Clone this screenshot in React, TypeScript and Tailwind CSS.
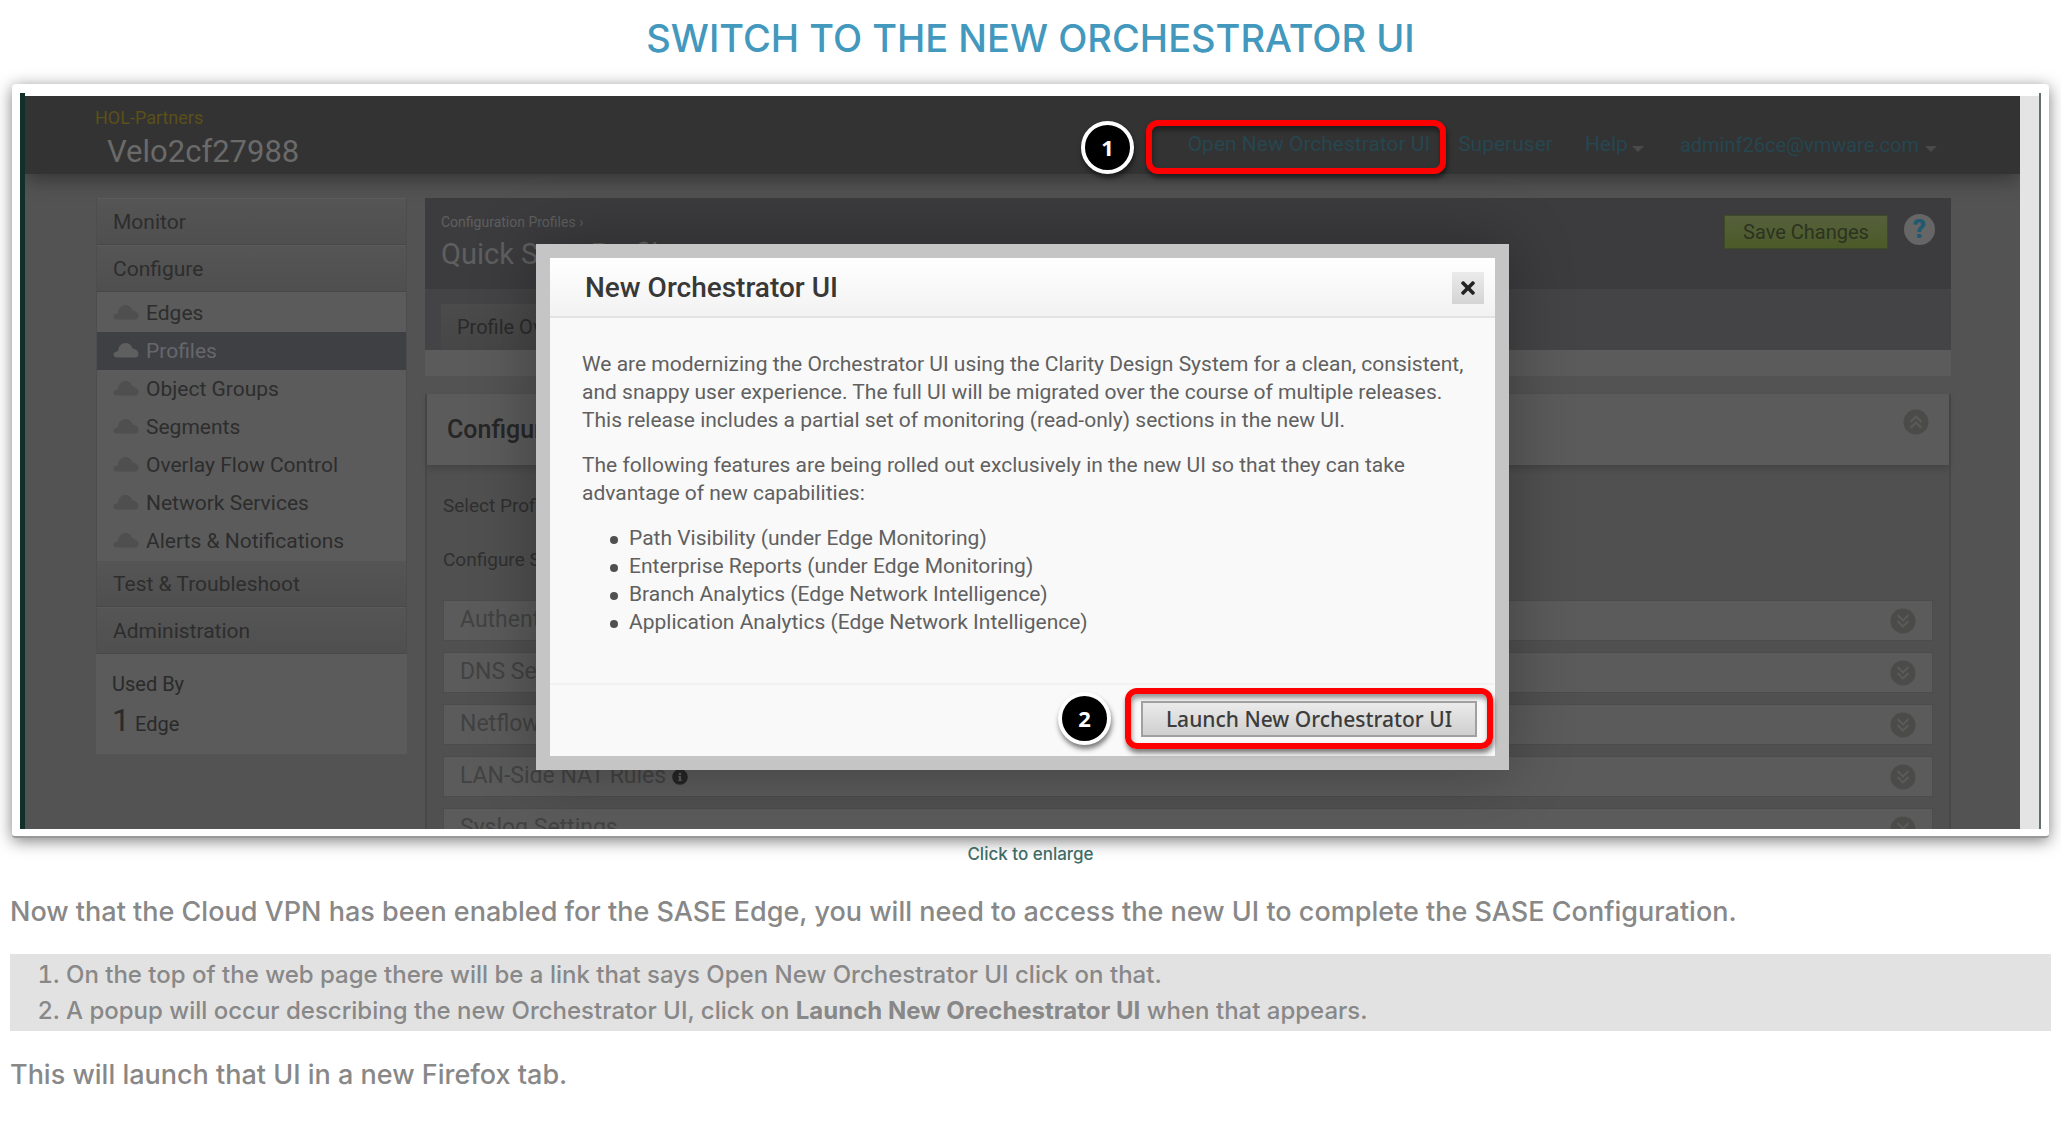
import type { ReactNode } from "react";
import { FaTimes, FaInfoCircle } from "react-icons/fa";

const CONFIGURE_ITEMS = [
  "Edges",
  "Profiles",
  "Object Groups",
  "Segments",
  "Overlay Flow Control",
  "Network Services",
  "Alerts & Notifications",
];

const SECTIONS = ["Authentication", "DNS Settings", "Netflow Settings", "LAN-Side NAT Rules", "Syslog Settings"];

const FEATURES = [
  "Path Visibility (under Edge Monitoring)",
  "Enterprise Reports (under Edge Monitoring)",
  "Branch Analytics (Edge Network Intelligence)",
  "Application Analytics (Edge Network Intelligence)",
];

function Chevrons({ up = false }: { up?: boolean }) {
  return (
    <svg viewBox="0 0 26 26" className="size-[26px] shrink-0" aria-hidden="true">
      <circle cx="13" cy="13" r="12.5" fill="#4b4b49" />
      <g fill="none" stroke="#5a5a59" strokeWidth="2.2" transform={up ? undefined : "rotate(180 13 13)"}>
        <path d="M7.5 13 13 7.5 18.5 13" />
        <path d="M7.5 19 13 13.5 18.5 19" />
      </g>
    </svg>
  );
}

function Cloud({ active }: { active: boolean }) {
  return (
    <svg viewBox="0 0 26 16" className="mb-1 h-4 w-[26px] shrink-0" aria-hidden="true">
      <path
        d="M4 15.5C1.500 15.500 .5 14 .5 12.500 .5 10.500 2.500 9.500 5 9.300 5.500 4 8.500 1 12.500 1 16 1 18.500 3 19.500 6.500 23 7 25.500 9 25.500 12 25.500 14.500 24 15.500 22 15.500Z"
        fill={active ? "#5f5f5f" : "#4f4f4f"}
      />
    </svg>
  );
}

function Caret() {
  return <span className="mt-2 border-x-6 border-t-6 border-x-transparent border-t-[#4a4a4a]" />;
}

function Badge({ children }: { children: ReactNode }) {
  return (
    <span className="flex size-[53px] shrink-0 items-center justify-center rounded-full border-4 border-white bg-black font-['Open_Sans',sans-serif] text-[22px] font-bold text-white shadow-[1px_4px_5px_rgba(0,0,0,0.5)]">
      {children}
    </span>
  );
}

function NavHeading({ children }: { children: ReactNode }) {
  return (
    <a
      href="#"
      className="flex h-[47px] items-center border-t border-b border-t-[#5b5b5b] border-b-[#484848] bg-linear-to-b from-[#555555] to-[#4f4f4f] px-4 pt-[2px] text-[#2d2d2d]"
    >
      {children}
    </a>
  );
}

function Sidebar() {
  return (
    <aside className="w-[311px] shrink-0 text-[21px] text-[#2a2a2a]">
      <nav className="border-x border-[#4d4d4d]">
        <NavHeading>Monitor</NavHeading>
        <NavHeading>Configure</NavHeading>
        <ul className="bg-[#5b5b5b] pt-[2px]">
          {CONFIGURE_ITEMS.map((item) => {
            const active = item === "Profiles";
            return (
              <li key={item}>
                <a
                  href="#"
                  className={
                    active
                      ? "flex h-[38px] items-center gap-[7px] bg-[#3f4044] px-4 pt-[2px] text-[#66676c]"
                      : "flex h-[38px] items-center gap-[7px] px-4 pt-[2px] text-[#2d2d2d]"
                  }
                >
                  <Cloud active={active} />
                  {item}
                </a>
              </li>
            );
          })}
        </ul>
        <NavHeading>Test &amp; Troubleshoot</NavHeading>
        <NavHeading>Administration</NavHeading>
      </nav>
      <section className="h-[100px] bg-[#5b5b5b] px-4 pt-3">
        <h2 className="pt-1 text-[20px] leading-7">Used By</h2>
        <p className="text-[20px] leading-[44px]">
          <span className="text-[32px]">1</span> Edge
        </p>
      </section>
    </aside>
  );
}

function Profile() {
  return (
    <main className="flex min-w-0 flex-1 flex-col">
      <header className="flex h-[91px] justify-between bg-[#3c3c3e] px-4 pt-4">
        <div className="text-[#5f5f5f]">
          <p className="text-[14px] leading-4">Configuration Profiles ›</p>
          <h1 className="mt-1 text-[29px] leading-10">Quick Start Profile</h1>
        </div>
        <div className="flex items-start gap-4">
          <button
            type="button"
            className="mt-px h-[34px] w-[164px] border border-[#3c4a26] bg-linear-to-b from-[#56603c] to-[#4b5a28] text-[20px] leading-8 text-[#2c3320]"
          >
            Save Changes
          </button>
          <button
            type="button"
            aria-label="Help"
            className="flex size-[31px] items-center justify-center rounded-full bg-[#666666] text-[26px] font-black text-[#1f5a70]"
          >
            ?
          </button>
        </div>
      </header>
      <div className="flex h-[61px] items-end bg-[#444446] px-4">
        <a
          href="#"
          className="flex h-[46px] w-[180px] items-center bg-linear-to-b from-[#4b4b4b] to-[#464646] px-4 text-[20px] text-[#2a2a2a]"
        >
          Profile Overview
        </a>
      </div>
      <div className="h-[26px] bg-[#5b5b5b]" />
      <section className="mt-[18px] border-x-2 border-[#484848] bg-[#505050]">
        <div className="flex h-[72px] items-center justify-between border-b border-[#464646] bg-[#5b5b5b] pr-5 pl-5 shadow-[0_3px_6px_rgba(0,0,0,0.15)]">
          <h2 className="text-[25px] font-medium text-[#262626]">Configure Segments</h2>
          <div className="mb-4">
            <Chevrons up />
          </div>
        </div>
        <div className="px-4 text-[19px] text-[#2f2f2f]">
          <p className="pt-7 leading-6">Select Profile Segment</p>
          <p className="pt-[30px] leading-6">Configure Segment</p>
          <ul className="mt-7 flex flex-col gap-[11px] text-[23px] text-[#424242]">
            {SECTIONS.map((name) => (
              <li
                key={name}
                className="flex h-[41px] items-center justify-between border border-[#4c4c4c] bg-[#5b5b5b] pr-4 pl-4"
              >
                <span className="flex items-center gap-[6px]">
                  {name}
                  {name === "LAN-Side NAT Rules" && <FaInfoCircle className="size-4 text-[#262626]" />}
                </span>
                <Chevrons />
              </li>
            ))}
          </ul>
        </div>
      </section>
    </main>
  );
}

function Dialog() {
  return (
    <div
      role="dialog"
      aria-label="New Orchestrator UI"
      className="w-[973px] border-14 border-[#c5c5c5] bg-[#f9f9f9] text-[21px] leading-7 text-[#606060] shadow-[0_0_60px_rgba(0,0,0,0.3)]"
    >
      <header className="flex h-[60px] items-center justify-between border-b-2 border-[#e3e3e3] bg-linear-to-b from-white to-[#f2f2f2] pt-[2px] pr-[11px] pl-[35px]">
        <h2 className="text-[28px] font-medium text-[#383838]">New Orchestrator UI</h2>
        <button
          type="button"
          aria-label="Close"
          className="flex size-8 items-center justify-center bg-linear-to-b from-[#ebebeb] to-[#d4d4d4] text-[#222222]"
        >
          <FaTimes className="size-5" />
        </button>
      </header>
      <div className="h-[365px] px-8 pt-8 whitespace-nowrap">
        <p>
          We are modernizing the Orchestrator UI using the Clarity Design System for a clean, consistent,
          <br />
          and snappy user experience. The full UI will be migrated over the course of multiple releases.
          <br />
          This release includes a partial set of monitoring (read-only) sections in the new UI.
        </p>
        <p className="mt-[17px]">
          The following features are being rolled out exclusively in the new UI so that they can take
          <br />
          advantage of new capabilities:
        </p>
        <ul className="mt-[17px]">
          {FEATURES.map((feature) => (
            <li key={feature} className="flex items-center gap-[11px] pl-7">
              <span className="mt-1 size-2 rounded-full bg-[#505050]" />
              {feature}
            </li>
          ))}
        </ul>
      </div>
      <footer className="flex h-[73px] items-center justify-end gap-[14px] border-t-2 border-[#f2f2f2] pr-[2px] pb-[5px]">
        <Badge>2</Badge>
        <span className="flex h-[61px] w-[368px] items-center justify-center rounded-xl border-6 border-[#ff0000] shadow-[1px_4px_5px_rgba(0,0,0,0.5),inset_1px_4px_5px_rgba(0,0,0,0.4)]">
          <button
            type="button"
            className="mt-[2px] h-[36px] w-[336px] border-2 border-[#a0a0a0] bg-linear-to-b from-[#ebebeb] to-[#cfcfcf] font-['Noto_Sans',sans-serif] text-[21px] leading-8 font-medium text-[#3c3c3c]"
          >
            Launch New Orchestrator UI
          </button>
        </span>
      </footer>
    </div>
  );
}

function Console() {
  return (
    <div className="relative flex h-[736px] overflow-hidden border-r-2 border-l-5 border-r-[#5f7069] border-l-[#12302a] pt-[3px] font-['Roboto',sans-serif] font-normal">
      <div className="relative flex min-w-0 flex-1 flex-col overflow-hidden bg-[#535353]">
        <header className="flex h-[78px] shrink-0 justify-between bg-[#333333] pr-[83px] pl-[70px] shadow-[0_4px_20px_rgba(0,0,0,0.4)]">
          <div className="pt-2">
            <p className="text-[18px] leading-7 text-[#5a5018]">HOL-Partners</p>
            <p className="pl-3 text-[31px] leading-10 text-[#6a6a6a]">Velo2cf27988</p>
          </div>
          <nav className="flex items-center pt-5 text-[21px] text-[#264650]">
            <div className="relative mr-7">
              <a href="#">Open New Orchestrator UI</a>
              <div className="absolute top-1/2 -right-4 flex -translate-y-1/2 items-center gap-3 pt-1">
                <Badge>1</Badge>
                <span className="h-[54px] w-[300px] rounded-xl border-6 border-[#ff0000] shadow-[1px_4px_5px_rgba(0,0,0,0.5),inset_1px_4px_5px_rgba(0,0,0,0.4)]" />
              </div>
            </div>
            <a href="#" className="mr-8">
              Superuser
            </a>
            <a href="#" className="mr-9 flex items-center gap-1">
              Help
              <Caret />
            </a>
            <a href="#" className="flex items-center gap-[6px] text-[20px]">
              adminf26ce@vmware.com
              <Caret />
            </a>
          </nav>
        </header>
        <div className="flex gap-[18px] pt-6 pr-[69px] pl-[71px]">
          <Sidebar />
          <Profile />
        </div>
        <div className="absolute inset-x-0 top-[148px] flex justify-center">
          <Dialog />
        </div>
      </div>
      <div className="w-[19px] shrink-0 bg-[#e4e4e4]" />
    </div>
  );
}

export default function App() {
  return (
    <article className="min-h-screen bg-white px-[10px] font-['Inter',sans-serif] text-[27px] font-medium text-[#888888]">
      <h1 className="pt-4 text-center text-[38px] leading-11 text-[#4398bd]">SWITCH TO THE NEW ORCHESTRATOR UI</h1>
      <figure className="mt-6">
        <div className="mx-[2px] rounded-sm border-b-2 border-[#999999] bg-white px-2 pt-[9px] pb-[7px] shadow-[0_3px_16px_rgba(0,0,0,0.5)]">
          <Console />
        </div>
        <figcaption className="pt-1 text-center text-[17px] leading-6 text-[#3f6b66]">
          <a href="#">Click to enlarge</a>
        </figcaption>
      </figure>
      <p className="mt-7 leading-9">
        Now that the Cloud VPN has been enabled for the SASE Edge, you will need to access the new UI to complete the SASE
        Configuration.
      </p>
      <ol className="mt-6 list-decimal bg-[#e2e2e2] pt-[3px] pb-[2px] pl-14 text-[24px] leading-9">
        <li>On the top of the web page there will be a link that says Open New Orchestrator UI click on that.</li>
        <li>
          A popup will occur describing the new Orchestrator UI, click on <strong>Launch New Orechestrator UI</strong> when that
          appears.
        </li>
      </ol>
      <p className="mt-6 leading-10">This will launch that UI in a new Firefox tab.</p>
    </article>
  );
}
